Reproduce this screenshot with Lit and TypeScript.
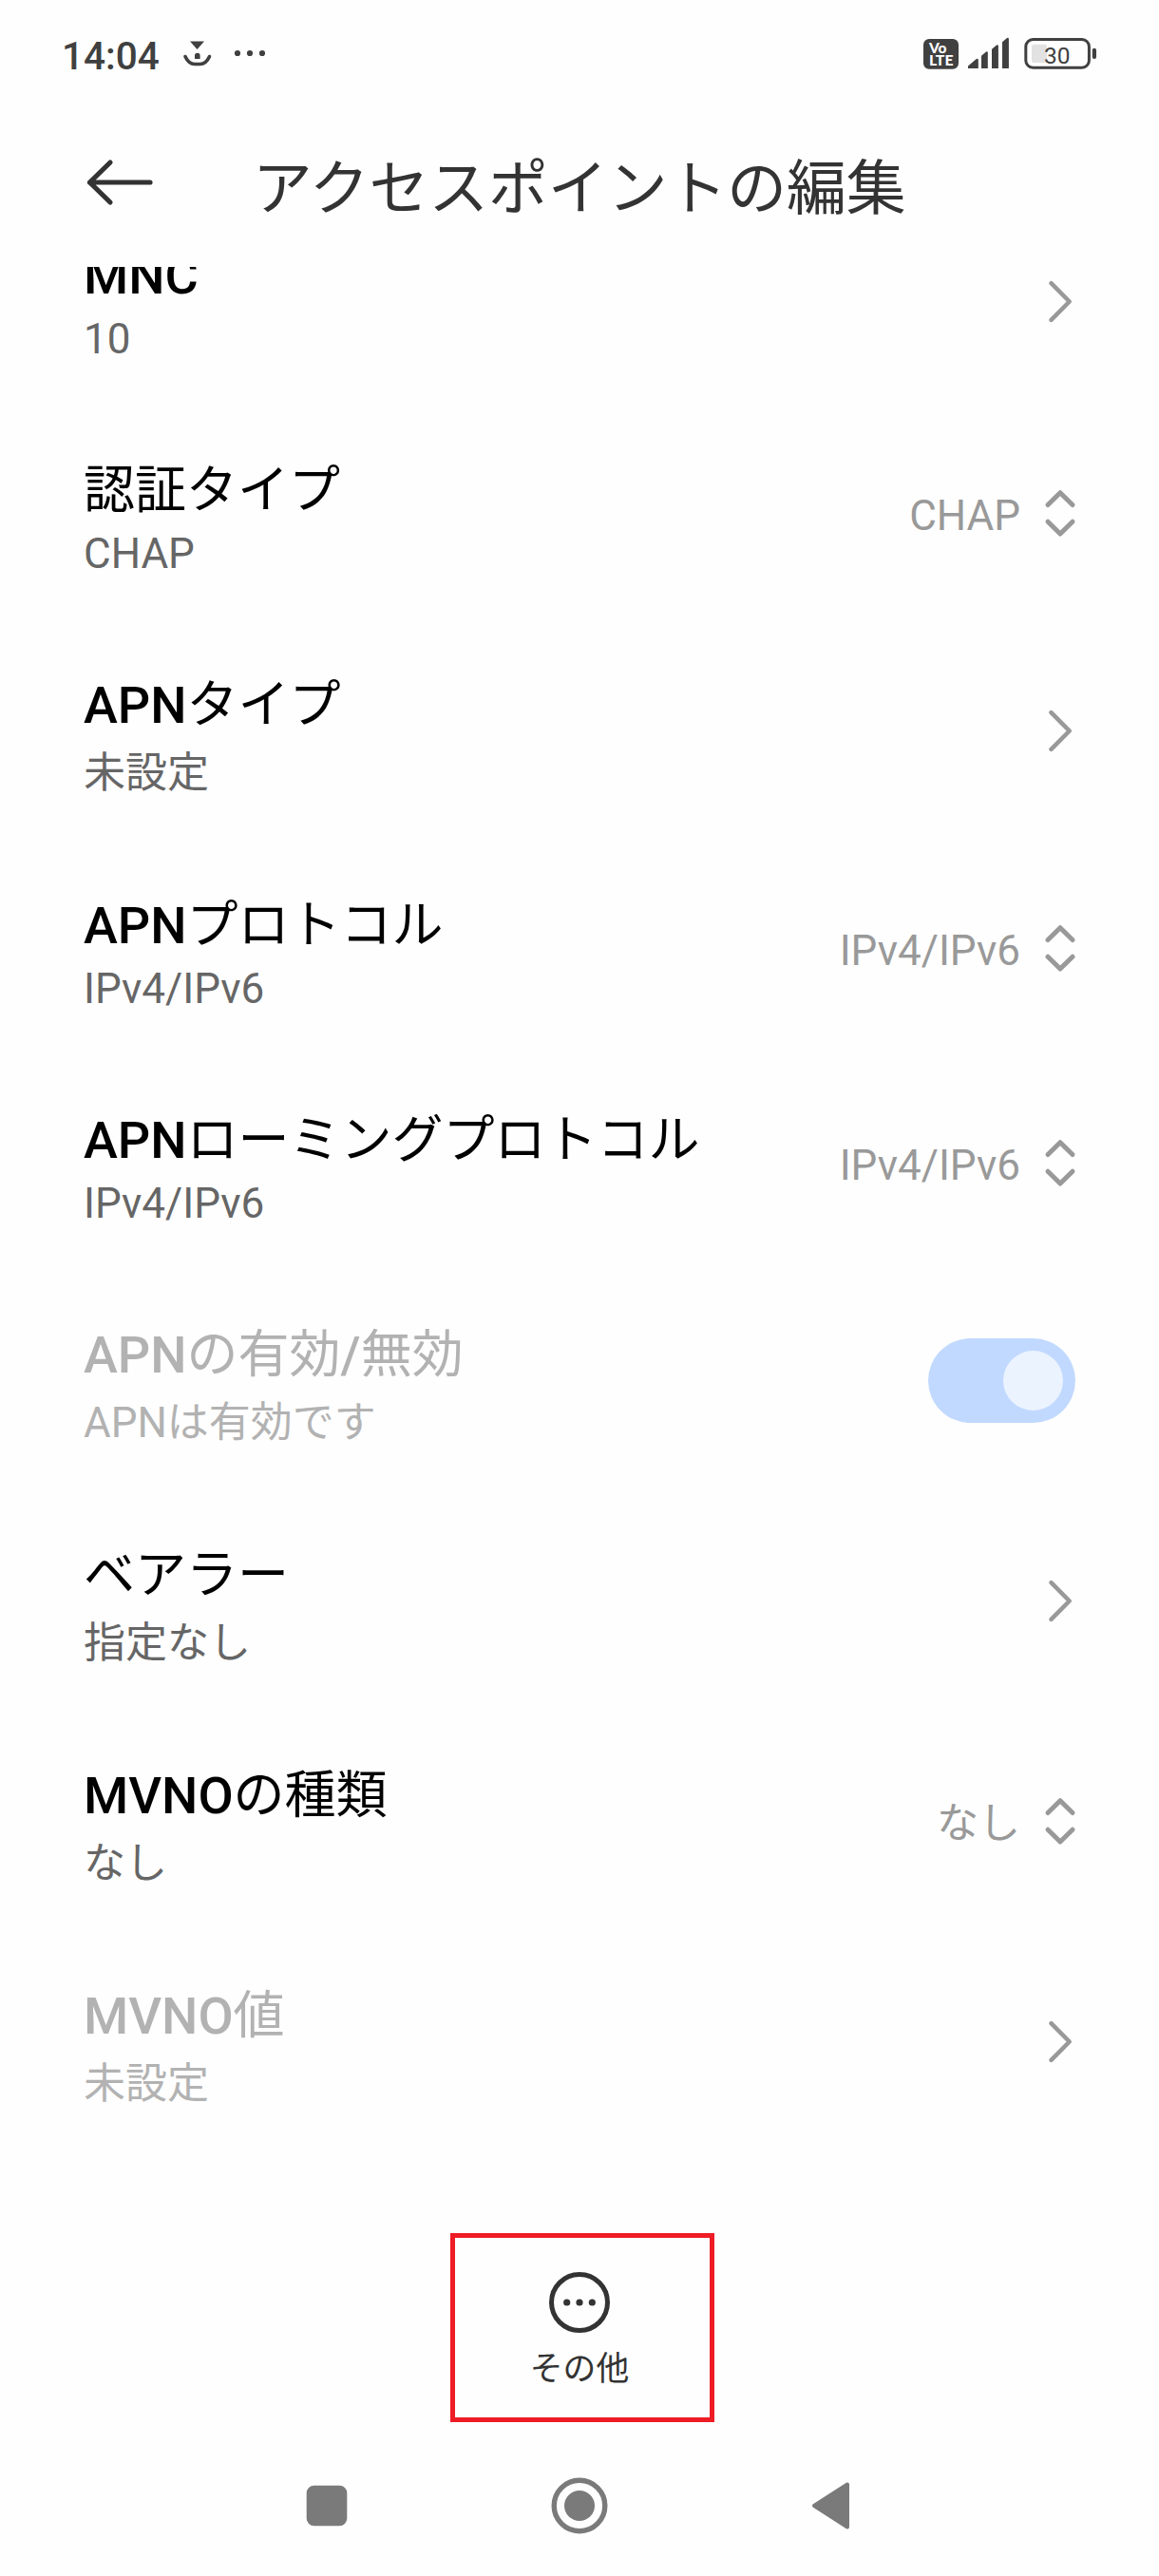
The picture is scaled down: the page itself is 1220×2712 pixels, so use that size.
import { LitElement, html, css, svg, nothing } from "lit";
import { customElement, property } from "lit/decorators.js";
import { classMap } from "lit/directives/class-map.js";

type Side = "chevron" | "picker" | "switch";

interface Pref {
  title: string;
  summary: string;
  side: Side;
  value?: string;
  disabled?: boolean;
}

const PREFS: Pref[] = [
  { title: "MNC", summary: "10", side: "chevron" },
  { title: "認証タイプ", summary: "CHAP", side: "picker", value: "CHAP" },
  { title: "APNタイプ", summary: "未設定", side: "chevron" },
  { title: "APNプロトコル", summary: "IPv4/IPv6", side: "picker", value: "IPv4/IPv6" },
  { title: "APNローミングプロトコル", summary: "IPv4/IPv6", side: "picker", value: "IPv4/IPv6" },
  { title: "APNの有効/無効", summary: "APNは有効です", side: "switch", disabled: true },
  { title: "ベアラー", summary: "指定なし", side: "chevron" },
  { title: "MVNOの種類", summary: "なし", side: "picker", value: "なし" },
  { title: "MVNO値", summary: "未設定", side: "chevron", disabled: true },
];

const isLatin = (s: string) => /^[\x20-\x7e]+$/.test(s);

@customElement("status-bar")
class StatusBar extends LitElement {
  static styles = css`
    :host {
      display: flex;
      align-items: flex-start;
      justify-content: space-between;
      flex: none;
      height: 114px;
      padding: 0 64px 0 65px;
      box-sizing: border-box;
      color: #404040;
    }
    .left {
      display: flex;
      padding-top: 35px;
    }
    .clock {
      font-size: 40.500px;
      line-height: 48px;
      font-weight: 500;
      width: 127px;
      white-space: nowrap;
    }
    svg {
      display: block;
      flex: none;
    }
    .right {
      padding-top: 36px;
    }
  `;
  render() {
    return html`
      <div class="left">
        <span class="clock">14:04</span>
        <svg width="90" height="40" viewBox="192 35 90 40">
          <path d="M200 43.500h15l-7.500 8.500z" fill="#404040" />
          <path d="M205 62v-3.400a2.800 2.800 0 0 1 5.600 0V62z" fill="#404040" />
          <path d="M195 59.500c2.500 5.500 6 8 10 8h5.500c4 0 7.500-2.500 10-8" fill="none" stroke="#404040" stroke-width="3.600" stroke-linecap="round" />
          <circle cx="250" cy="56" r="3.100" fill="#404040" />
          <circle cx="263" cy="56" r="3.100" fill="#404040" />
          <circle cx="276" cy="56" r="3.100" fill="#404040" />
        </svg>
      </div>
      <div class="right">
        <svg width="184" height="40" viewBox="973 36 184 40">
          <rect x="973" y="41" width="37" height="31.700" rx="6" fill="#404040" />
          <g fill="#fff" font-family="Lato, sans-serif" font-weight="900">
            <text x="979" y="56" font-size="14.500" textLength="18.500" lengthAdjust="spacingAndGlyphs">Vo</text>
            <text x="979" y="69" font-size="15" textLength="25.500" lengthAdjust="spacingAndGlyphs">LTE</text>
          </g>
          <g fill="#404040">
            <path d="M1020 72v-2.500l8.500-7.300q2-1 2.300.8v9z" />
            <path d="M1034 72V58.700l5-4.200q1.700-.8 1.800 1V72z" />
            <path d="M1045 72V51.700l5-4.200q1.700-.8 1.900 1V72z" />
            <path d="M1056 72V44.300l5-4.200q1.700-.8 1.900 1V72z" />
            <rect x="1150.800" y="50.700" width="4.200" height="11.300" rx="2" />
          </g>
          <rect x="1080.800" y="41.500" width="66.600" height="29.700" rx="7.500" fill="none" stroke="#404040" stroke-width="3" />
          <rect x="1087" y="46.700" width="16" height="19.300" rx="2.500" fill="#e2e2e2" />
          <text x="1100" y="66.600" font-family="Roboto, sans-serif" font-size="24.500" fill="#404040">30</text>
        </svg>
      </div>
    `;
  }
}

@customElement("pref-row")
class PrefRow extends LitElement {
  @property({ attribute: false }) pref!: Pref;

  static styles = css`
    :host {
      display: block;
    }
    .row {
      display: flex;
      align-items: flex-start;
      justify-content: space-between;
      height: 232px;
      padding: 0 86px 0 88px;
      box-sizing: border-box;
    }
    .row.compact {
      height: 226px;
    }
    .texts {
      padding-top: 55px;
      white-space: nowrap;
    }
    .title {
      font-size: 54px;
      line-height: 63px;
      color: #000;
    }
    .latin {
      font-weight: 500;
    }
    .summary {
      margin-top: 14px;
      font-size: 44px;
      line-height: 52px;
      color: #666;
    }
    .compact .summary {
      margin-top: 8.500px;
    }
    .disabled .title,
    .disabled .summary {
      color: #b2b2b2;
    }
    .side {
      display: flex;
      align-items: center;
      height: 226px;
    }
    .side.tall {
      height: 232px;
    }
    .value {
      font-size: 44px;
      line-height: 52px;
      color: #999;
      margin-right: 24px;
      white-space: nowrap;
    }
    svg {
      display: block;
      fill: none;
      stroke: #999;
      stroke-width: 4.600;
      stroke-linecap: round;
      stroke-linejoin: round;
    }
    .switch {
      display: flex;
      align-items: center;
      justify-content: flex-end;
      width: 155px;
      height: 89px;
      padding-right: 13px;
      margin: 1px 2px 0 0;
      box-sizing: border-box;
      border-radius: 45px;
      background: #c1d9ff;
    }
    .knob {
      width: 63px;
      height: 63px;
      border-radius: 50%;
      background: #ebf3ff;
    }
  `;

  private renderTitle(text: string) {
    return text
      .split(/([\x20-\x7e]+)/)
      .filter((part) => part)
      .map((part) => (isLatin(part) ? html`<span class="latin">${part}</span>` : part));
  }

  private renderSide({ side, value }: Pref) {
    if (side === "switch") return html`<div class="switch"><div class="knob"></div></div>`;
    return html`
      ${value ? html`<span class="value">${value}</span>` : nothing}
      <svg width="36" height="56" viewBox="0 0 36 56">
        ${side === "chevron"
          ? svg`<path d="M8.500 9.200 27.700 28.500 8.500 47.800" />`
          : svg`<path stroke-width="5" d="M5 16.500 18 3.700 31 16.500M5 34.200 18 47 31 34.200" />`}
      </svg>
    `;
  }

  render() {
    const p = this.pref;
    const tall = !!p.value && !isLatin(p.value);
    return html`
      <div class=${classMap({ row: true, compact: isLatin(p.summary), disabled: !!p.disabled })}>
        <div class="texts">
          <div class="title">${this.renderTitle(p.title)}</div>
          <div class="summary">${p.summary}</div>
        </div>
        <div class=${classMap({ side: true, tall })}>${this.renderSide(p)}</div>
      </div>
    `;
  }
}

@customElement("app-root")
class AppRoot extends LitElement {
  static styles = css`
    :host {
      display: flex;
      flex-direction: column;
      width: 1220px;
      height: 2712px;
      background: #fefefe;
      overflow: hidden;
      font-family: Roboto, "Noto Sans CJK JP", sans-serif;
    }
    svg {
      display: block;
      flex: none;
    }
    .appbar {
      display: flex;
      align-items: center;
      height: 167px;
      padding: 0 90px;
      box-sizing: border-box;
      flex: none;
    }
    .back {
      margin-bottom: 11px;
    }
    .heading {
      margin: 2px 0 0 104px;
      font-size: 62.800px;
      line-height: 76px;
      font-weight: 400;
      color: #333;
      white-space: nowrap;
    }
    .list {
      height: 2070px;
      overflow: hidden;
      flex: none;
    }
    .rows {
      margin-top: -77px;
    }
    .more {
      display: flex;
      flex-direction: column;
      align-items: center;
      align-self: center;
      width: 278px;
      height: 199px;
      margin-left: 6px;
      padding: 36px 6px 0 0;
      box-sizing: border-box;
      border: 5px solid #ee1c25;
      flex: none;
    }
    .more-label {
      margin-top: 14px;
      font-size: 34.800px;
      line-height: 48px;
      color: #333;
    }
    .nav {
      display: flex;
      align-items: center;
      justify-content: space-between;
      flex: 1;
      padding: 14px 323px 0 322px;
      box-sizing: border-box;
    }
  `;

  render() {
    return html`
      <status-bar></status-bar>
      <header class="appbar">
        <svg class="back" width="72" height="52" viewBox="0 0 72 52" fill="none" stroke="#333" stroke-width="5.200" stroke-linecap="round" stroke-linejoin="round">
          <path d="M4.500 26H68M26 5 4.500 26 26 47" />
        </svg>
        <h1 class="heading">アクセスポイントの編集</h1>
      </header>
      <main class="list">
        <div class="rows">${PREFS.map((p) => html`<pref-row .pref=${p}></pref-row>`)}</div>
      </main>
      <div class="more">
        <svg width="64" height="64" viewBox="0 0 64 64">
          <circle cx="32" cy="32" r="29.500" fill="none" stroke="#333" stroke-width="5" />
          <g fill="#333">
            <circle cx="18.700" cy="32" r="3.600" />
            <circle cx="32" cy="32" r="3.600" />
            <circle cx="45.300" cy="32" r="3.600" />
          </g>
        </svg>
        <span class="more-label">その他</span>
      </div>
      <nav class="nav">
        <svg width="44" height="44" viewBox="0 0 44 44">
          <rect x="0.700" y="0.700" width="42.600" height="42.600" rx="8" fill="#7a7a7a" />
        </svg>
        <svg width="60" height="60" viewBox="0 0 60 60">
          <circle cx="30" cy="30" r="26.800" fill="none" stroke="#7a7a7a" stroke-width="5.400" />
          <circle cx="30" cy="30" r="16" fill="#7a7a7a" />
        </svg>
        <svg width="44" height="52" viewBox="0 0 44 52">
          <path d="M4 26 39 3.500V48.500z" fill="#7a7a7a" stroke="#7a7a7a" stroke-width="4" stroke-linejoin="round" />
        </svg>
      </nav>
    `;
  }
}
